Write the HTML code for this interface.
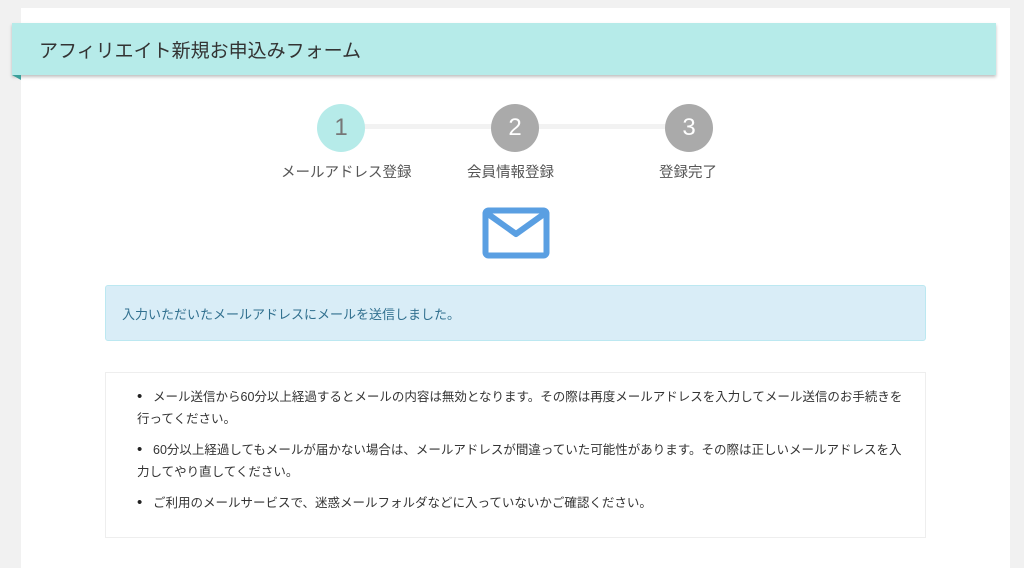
<!DOCTYPE html>
<html><head><meta charset="utf-8"><style>
body{margin:0;width:1024px;height:559px;background:#f1f1f1;font-family:"Liberation Sans","Noto Sans CJK JP",sans-serif;overflow:hidden;position:relative}
.card{position:absolute;left:21px;top:8px;width:989px;height:560px;background:#fff}
.hd{position:absolute;left:12px;top:23px;width:984px;height:52px;background:#b6ebe9;box-shadow:0 2px 3px rgba(0,0,0,.25)}
.hd span{position:absolute;left:27px;top:13px;font-size:19px;color:#333}
.tri{position:absolute;left:12px;top:75px;width:0;height:0;border-top:5px solid #3a9f9a;border-left:9px solid transparent}
.line{position:absolute;left:341px;top:124px;width:348px;height:5px;background:#f2f2f2}
.c{position:absolute;top:104px;width:48px;height:48px;border-radius:50%;background:#aaa;color:#fff;font-size:24px;text-align:center;line-height:48px}
.l{position:absolute;top:161px;font-size:14.5px;color:#555;white-space:nowrap}
.alert{position:absolute;left:105px;top:285px;width:819px;height:54px;background:#d9edf7;border:1px solid #bce8f1;border-radius:3px}
.alert span{position:absolute;left:16px;top:18px;font-size:13px;color:#31708f}
.box{position:absolute;left:105px;top:372px;width:819px;height:164px;border:1px solid #eee}
ul{margin:0;padding:0;list-style:none;position:absolute;left:31px;top:13px;width:775px;font-size:12.5px;color:#333;line-height:22px}
li{margin-bottom:9px}
li:before{content:"•";display:inline-block;width:16px;font-size:15px;color:#222}
</style></head><body>
<div class="card"></div>
<div class="hd"><span>アフィリエイト新規お申込みフォーム</span></div>
<div class="tri"></div>
<div class="line"></div>
<div class="c" style="left:317px;background:#b6ebe9;color:#777">1</div>
<div class="c" style="left:491px">2</div>
<div class="c" style="left:665px">3</div>
<div class="l" style="left:281px">メールアドレス登録</div>
<div class="l" style="left:467px">会員情報登録</div>
<div class="l" style="left:659px">登録完了</div>
<svg style="position:absolute;left:482px;top:207px" width="68" height="52" viewBox="0 0 68 52"><rect x="3.5" y="3.5" width="61" height="45" rx="3" fill="none" stroke="#5a9fe2" stroke-width="6"/><path d="M6 7 L34 27 L62 7" fill="none" stroke="#5a9fe2" stroke-width="6" stroke-linejoin="round"/></svg>
<div class="alert"><span>入力いただいたメールアドレスにメールを送信しました。</span></div>
<div class="box"><ul>
<li>メール送信から60分以上経過するとメールの内容は無効となります。その際は再度メールアドレスを入力してメール送信のお手続きを行ってください。</li>
<li>60分以上経過してもメールが届かない場合は、メールアドレスが間違っていた可能性があります。その際は正しいメールアドレスを入力してやり直してください。</li>
<li>ご利用のメールサービスで、迷惑メールフォルダなどに入っていないかご確認ください。</li>
</ul></div>
</body></html>
